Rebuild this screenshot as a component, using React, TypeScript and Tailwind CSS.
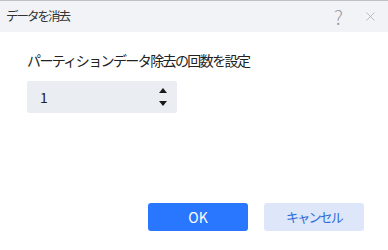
import { X } from 'lucide-react';

const font = { fontFamily: '"Noto Sans CJK JP", "Noto Sans", sans-serif' };

export default function App() {
  return (
    <div className="w-[388px] h-[250px] bg-white flex flex-col overflow-hidden" style={font}>
      {/* title bar */}
      <div className="h-[32px] bg-[#f2f3f6] border-t border-[#bfc1c6] flex items-center pl-[6px] pr-[10px]">
        <span className="text-[12.5px] tracking-[-2px] text-[#333] leading-none">データを消去</span>
        <div className="ml-auto flex items-center gap-[20px] text-[#9a9ca1]">
          <span className="text-[20px] leading-none font-light">?</span>
          <X className="w-[15px] h-[15px]" strokeWidth={1} />
        </div>
      </div>

      {/* body */}
      <div className="flex-1 px-[27px] pt-[18px]">
        <div className="text-[14px] tracking-[-1.6px] text-[#222] leading-[20px]">パーティションデータ除去の回数を設定</div>
        <div className="mt-[11px] w-[150px] h-[32px] bg-[#eaedf2] rounded-[2px] flex items-center pl-[13px] pr-[10px]">
          <span className="text-[14px] text-[#222]">1</span>
          <div className="ml-auto flex flex-col items-center gap-[8px]">
            <div className="w-0 h-0 border-l-[4px] border-r-[4px] border-b-[5px] border-l-transparent border-r-transparent border-b-[#1a1a1a]" />
            <div className="w-0 h-0 border-l-[4px] border-r-[4px] border-t-[5px] border-l-transparent border-r-transparent border-t-[#1a1a1a]" />
          </div>
        </div>
      </div>

      {/* footer */}
      <div className="flex justify-end gap-[16px] pr-[24px] pb-[19px]">
        <button className="w-[100px] h-[28px] rounded-[3px] bg-[#2a77ff] text-white text-[14px]">OK</button>
        <button className="w-[100px] h-[28px] rounded-[3px] bg-[#dde7f9] text-[#2f6bd8] text-[13px] tracking-[-1.8px]">キャンセル</button>
      </div>
    </div>
  );
}
